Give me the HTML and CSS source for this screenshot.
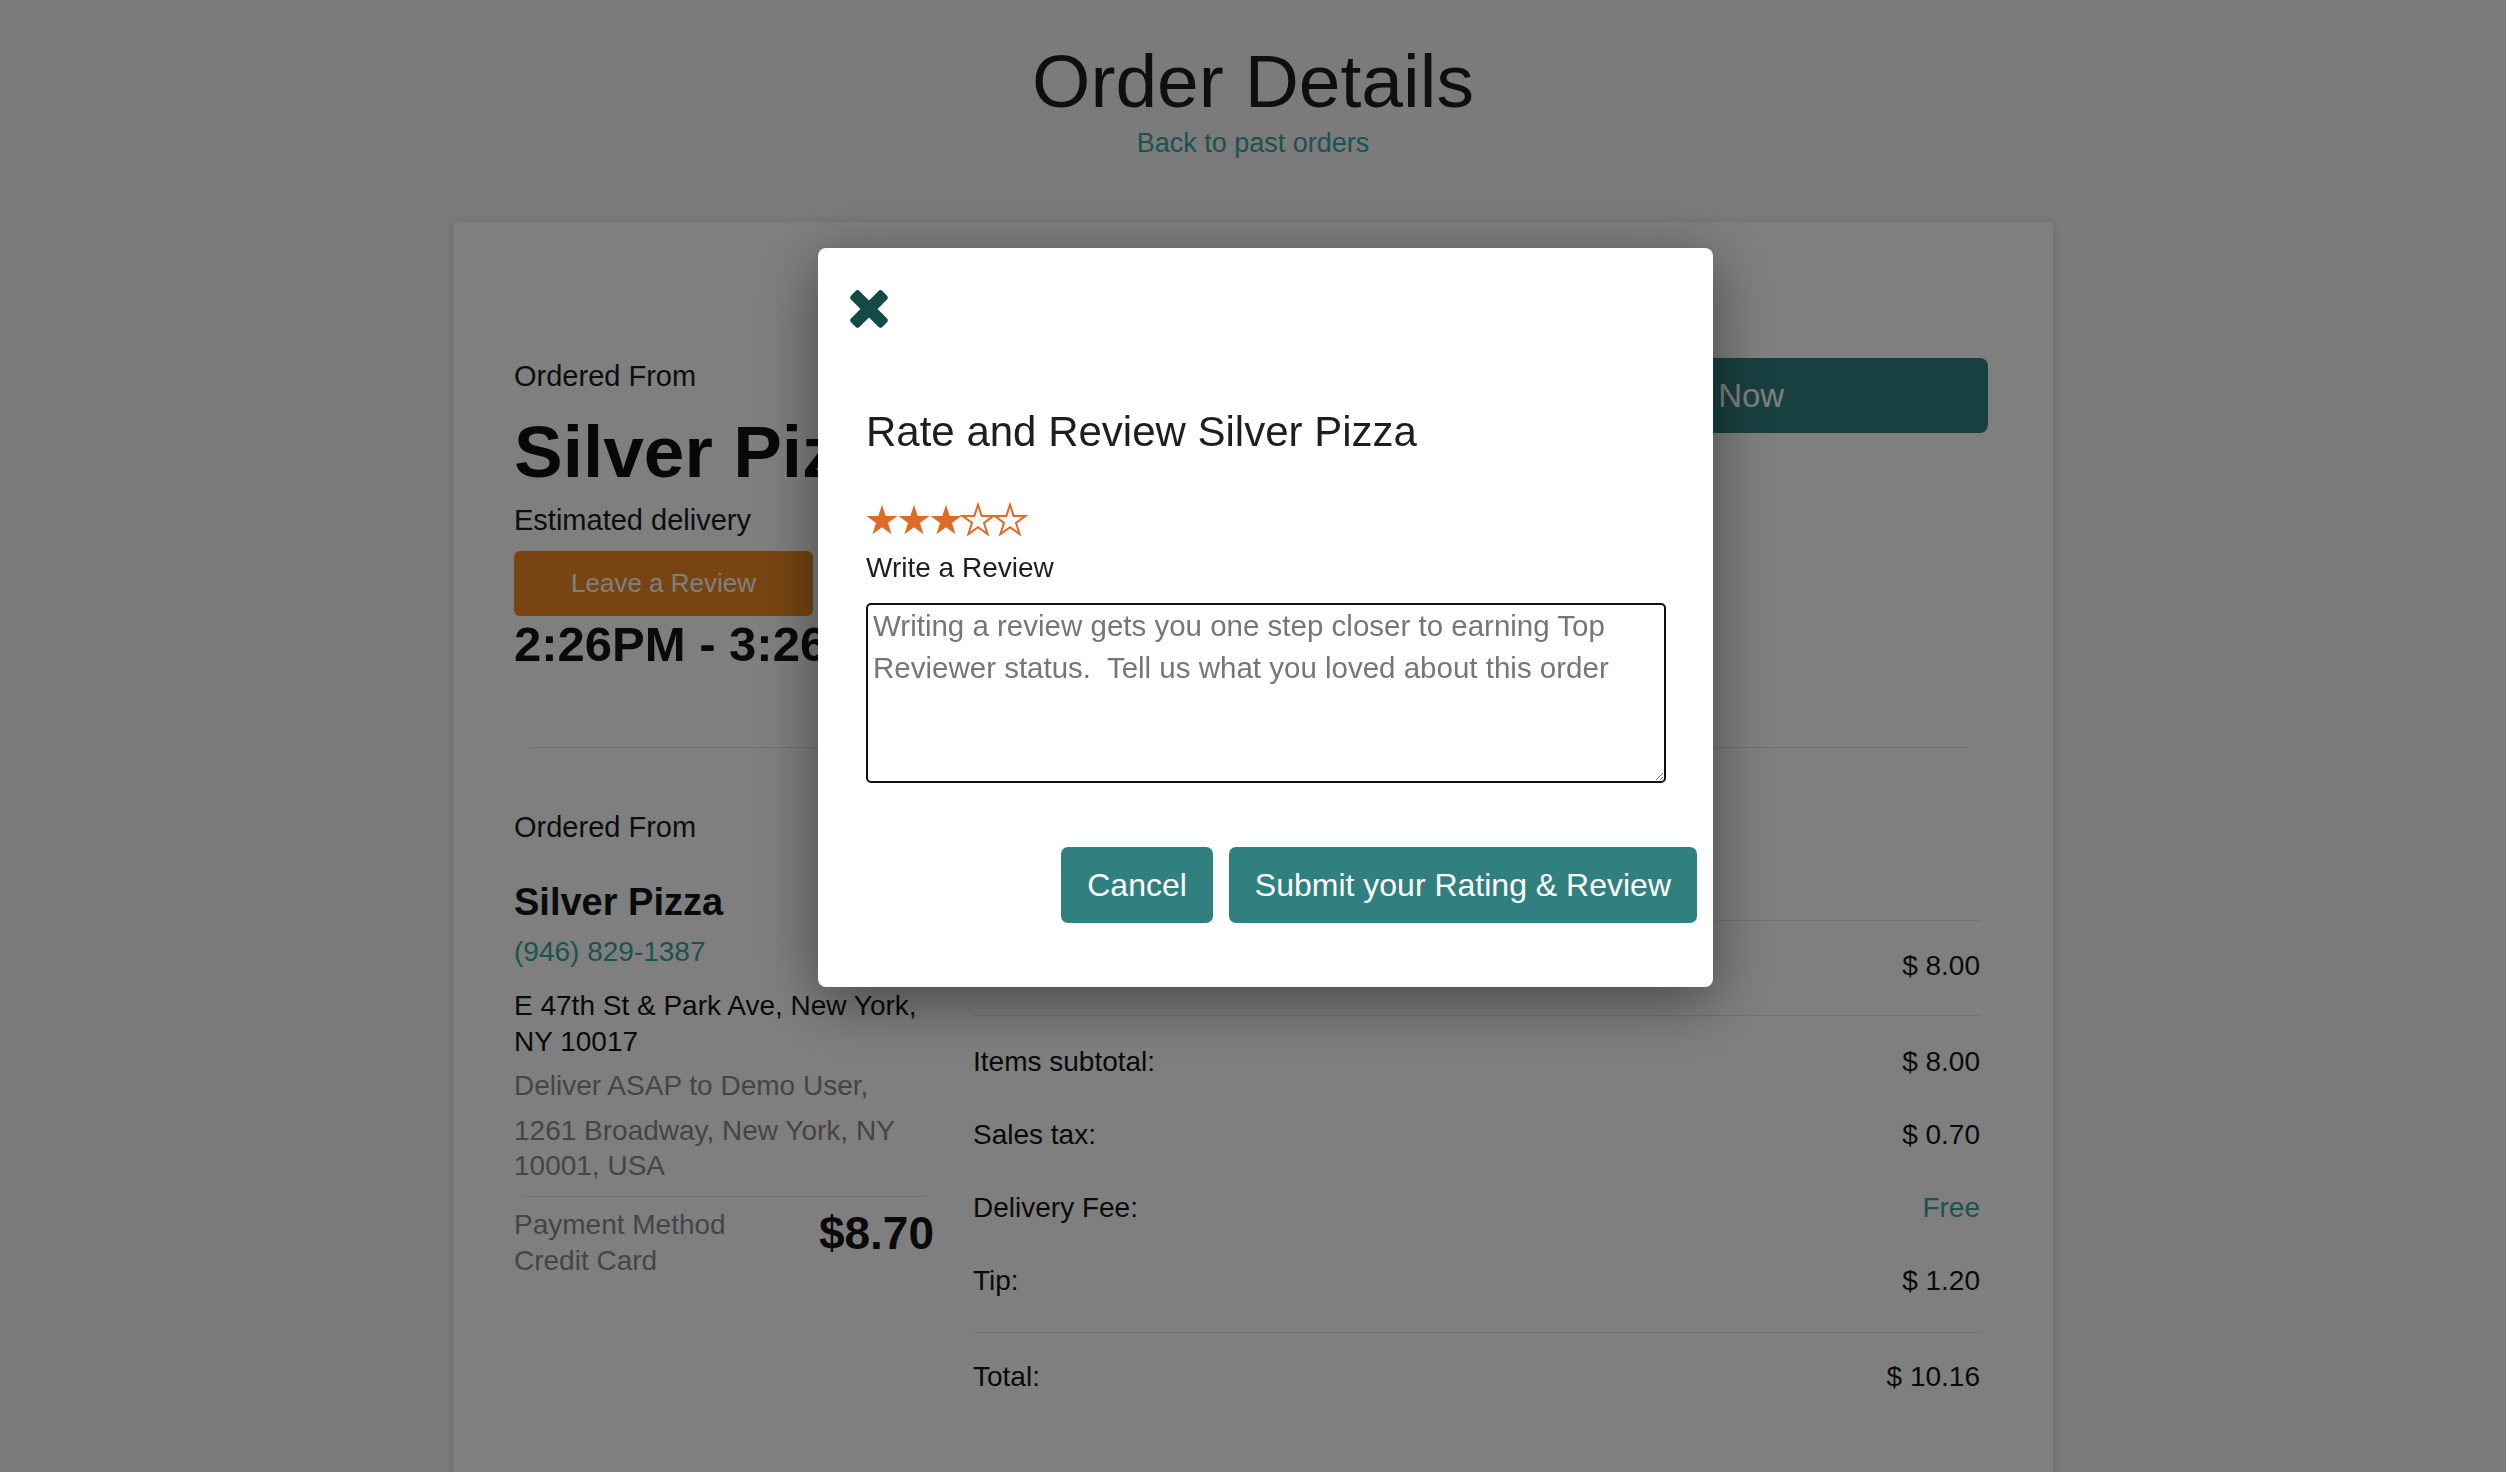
FILE: index.html
```html
<!DOCTYPE html>
<html lang="en">
<head>
<meta charset="utf-8">
<title>Order Details</title>
<link rel="stylesheet" href="styles.css">
</head>
<body>
<svg class="sprite" width="0" height="0" aria-hidden="true">
  <defs>
    <path id="star-shape" d="M16 0.8 L19.7 11.9 L31.4 11.9 L22 18.9 L25.6 30.2 L16 23.3 L6.4 30.2 L10 18.9 L0.6 11.9 L12.3 11.9 Z"/>
  </defs>
</svg>

<div class="page">
  <header class="page-head">
    <h1 class="page-title">Order Details</h1>
    <a class="back-link" href="#">Back to past orders</a>
  </header>

  <main class="card">
    <section class="order-top">
      <div class="top-info">
        <div class="label">Ordered From</div>
        <h2 class="rest-title">Silver Pizza</h2>
        <div class="label est">Estimated delivery</div>
        <button class="btn-review">Leave a Review</button>
        <div class="eta">2:26PM - 3:26PM</div>
      </div>
      <button class="btn-reorder">Reorder Now</button>
    </section>

    <div class="divider"></div>

    <section class="order-bottom">
      <div class="restaurant">
        <div class="label">Ordered From</div>
        <h3 class="rest-name">Silver Pizza</h3>
        <a class="phone" href="#">(946) 829-1387</a>
        <p class="address">E 47th St &amp; Park Ave, New York, NY 10017</p>
        <p class="muted deliver">Deliver ASAP to Demo User,</p>
        <p class="muted deliver-addr">1261 Broadway, New York, NY 10001, USA</p>
        <div class="divider small"></div>
        <div class="payment">
          <div class="muted pay-text">
            <div>Payment Method</div>
            <div>Credit Card</div>
          </div>
          <div class="pay-total">$8.70</div>
        </div>
      </div>

      <div class="summary">
        <div class="sum-heading">Your Order</div>
        <div class="sum-item">
          <span>1 x Cheese Pizza</span>
          <span>$ 8.00</span>
        </div>
        <div class="sum-rows">
          <div class="sum-row"><span>Items subtotal:</span><span>$ 8.00</span></div>
          <div class="sum-row"><span>Sales tax:</span><span>$ 0.70</span></div>
          <div class="sum-row"><span>Delivery Fee:</span><span class="free">Free</span></div>
          <div class="sum-row"><span>Tip:</span><span>$ 1.20</span></div>
        </div>
        <div class="sum-total"><span>Total:</span><span>$ 10.16</span></div>
      </div>
    </section>
  </main>
</div>

<div class="overlay"></div>

<div class="modal" role="dialog">
  <button class="modal-close" aria-label="Close">
    <svg viewBox="0 0 40 40" width="40" height="40">
      <g transform="rotate(45 20 20)" fill="#134a48">
        <rect x="-2.2" y="14" width="44.4" height="12" rx="3"/>
        <rect x="14" y="-2.2" width="12" height="44.4" rx="3"/>
      </g>
    </svg>
  </button>
  <h2 class="modal-title">Rate and Review Silver Pizza</h2>
  <div class="stars">
    <svg class="star" viewBox="0 0 32 32"><use href="#star-shape" class="star-full"/></svg>
    <svg class="star" viewBox="0 0 32 32"><use href="#star-shape" class="star-full"/></svg>
    <svg class="star" viewBox="0 0 32 32"><use href="#star-shape" class="star-full"/></svg>
    <svg class="star" viewBox="0 0 32 32"><use href="#star-shape" class="star-empty"/></svg>
    <svg class="star" viewBox="0 0 32 32"><use href="#star-shape" class="star-empty"/></svg>
  </div>
  <label class="write-label" for="review">Write a Review</label>
  <textarea id="review" class="review-input" placeholder="Writing a review gets you one step closer to earning Top Reviewer status.  Tell us what you loved about this order"></textarea>
  <div class="modal-actions">
    <button class="btn-teal">Cancel</button>
    <button class="btn-teal">Submit your Rating &amp; Review</button>
  </div>
</div>
</body>
</html>
```

FILE: styles.css
```css
* { box-sizing: border-box; }

html, body { height: 100%; }

body {
  margin: 0;
  overflow: hidden;
  background: #f6f6f6;
  font-family: "Liberation Sans", Arial, sans-serif;
  color: #1a1a1a;
}

button, textarea { font: inherit; }

.sprite { position: absolute; width: 0; height: 0; }

/* ---------- header ---------- */
.page-head {
  text-align: center;
  padding-top: 37px;
}
.page-title {
  margin: 0;
  font-size: 75px;
  line-height: 88px;
  font-weight: 400;
  color: #1e1e1e;
}
.back-link {
  display: block;
  width: fit-content;
  margin: 1px auto 0;
  font-size: 27px;
  line-height: 34px;
  color: #38a69e;
  text-decoration: none;
}

/* ---------- card ---------- */
.card {
  width: 1600px;
  margin: 62px auto 0;
  background: #fff;
  border-radius: 4px;
  box-shadow: 0 1px 8px rgba(0, 0, 0, 0.14);
  padding: 136px 65px 200px 61px;
}

.order-top {
  display: flex;
  justify-content: space-between;
  align-items: flex-start;
}
.label {
  font-size: 29px;
  line-height: 36px;
}
.rest-title {
  margin: 18px 0 0;
  font-size: 73px;
  line-height: 80px;
  font-weight: 700;
  color: #111;
}
.est { margin-top: 10px; }
.btn-review {
  display: block;
  margin-top: 13px;
  width: 299px;
  height: 65px;
  border: 0;
  border-radius: 6px;
  background: #f08a24;
  color: #fff;
  font-size: 26px;
}
.eta {
  font-size: 49px;
  line-height: 56px;
  font-weight: 700;
  color: #141414;
  white-space: nowrap;
}
.btn-reorder {
  width: 602px;
  height: 75px;
  border: 0;
  border-radius: 8px;
  background: #318080;
  color: #fff;
  font-size: 33px;
}

.divider {
  height: 1px;
  background: #e6e6e6;
  margin: 75px 18px 0 16px;
}
.divider.small { margin: 13px 8px 0 10px; }

/* ---------- bottom ---------- */
.order-bottom {
  display: grid;
  grid-template-columns: 420px 1007px;
  column-gap: 39px;
  margin-top: 61px;
  align-items: start;
}

.rest-name {
  margin: 34px 0 0;
  font-size: 38px;
  line-height: 46px;
  font-weight: 700;
  color: #141414;
}
.phone {
  display: block;
  margin-top: 9px;
  font-size: 28px;
  line-height: 36px;
  color: #36a89e;
  text-decoration: none;
}
.address, .deliver, .deliver-addr {
  margin: 0;
  font-size: 28px;
  line-height: 36px;
}
.address { margin-top: 18px; color: #141414; }
.muted { color: #8a8a8a; }
.deliver { margin-top: 8px; }
.deliver-addr { margin-top: 9px; line-height: 35px; }

.payment {
  display: flex;
  justify-content: space-between;
  align-items: flex-start;
  margin-top: 10px;
}
.pay-text {
  font-size: 28px;
  line-height: 36px;
}
.pay-total {
  margin-top: 0;
  font-size: 46px;
  line-height: 52px;
  font-weight: 700;
  color: #141414;
}

.summary {
  font-size: 28px;
  line-height: 36px;
  color: #141414;
}
.sum-heading {
  font-size: 29px;
  font-weight: 700;
}
.sum-item {
  display: flex;
  justify-content: space-between;
  margin-top: 75px;
  padding: 27px 0 31px;
  border-top: 1px solid #e6e6e6;
  border-bottom: 1px solid #e6e6e6;
}
.sum-rows {
  padding: 9px 0 15px;
  border-bottom: 1px solid #e6e6e6;
}
.sum-row {
  display: flex;
  justify-content: space-between;
  padding: 18.5px 0;
}
.free { color: #36a89e; }
.sum-total {
  display: flex;
  justify-content: space-between;
  padding-top: 26px;
}

/* ---------- modal ---------- */
.overlay {
  position: fixed;
  inset: 0;
  background: rgba(0, 0, 0, 0.5);
}
.modal {
  position: fixed;
  left: 818px;
  top: 248px;
  width: 895px;
  background: #fff;
  border-radius: 8px;
  box-shadow: 0 14px 60px rgba(0, 0, 0, 0.45);
  padding: 41px 47px 64px 48px;
}
.modal-close {
  display: block;
  width: 40px;
  height: 40px;
  margin-left: -17px;
  padding: 0;
  border: 0;
  background: none;
}
.modal-close svg { display: block; }
.modal-title {
  margin: 78px 0 0;
  font-size: 42px;
  line-height: 50px;
  font-weight: 400;
  color: #1e1e1e;
}
.stars {
  display: flex;
  height: 32px;
  margin-top: 47px;
}
.star {
  width: 32px;
  height: 32px;
  overflow: visible;
}
.star-full { fill: #df6b2b; }
.star-empty { fill: #fff; stroke: #df6b2b; stroke-width: 2; stroke-linejoin: miter; }
.write-label {
  display: block;
  margin-top: 14px;
  font-size: 28px;
  line-height: 36px;
  color: #1e1e1e;
}
.review-input {
  display: block;
  width: 100%;
  height: 180px;
  margin-top: 17px;
  padding: 0 5px;
  border: 2px solid #111;
  border-radius: 5px;
  font-size: 29.5px;
  line-height: 42px;
  color: #222;
  background: #fff;
}
.review-input::placeholder { color: #767676; opacity: 1; }

.modal-actions {
  display: flex;
  justify-content: flex-end;
  gap: 16px;
  margin-top: 64px;
  margin-right: -31px;
}
.btn-teal {
  height: 76px;
  padding: 0 26px;
  border: 0;
  border-radius: 7px;
  background: #318080;
  color: #fff;
  font-size: 32px;
}
```
